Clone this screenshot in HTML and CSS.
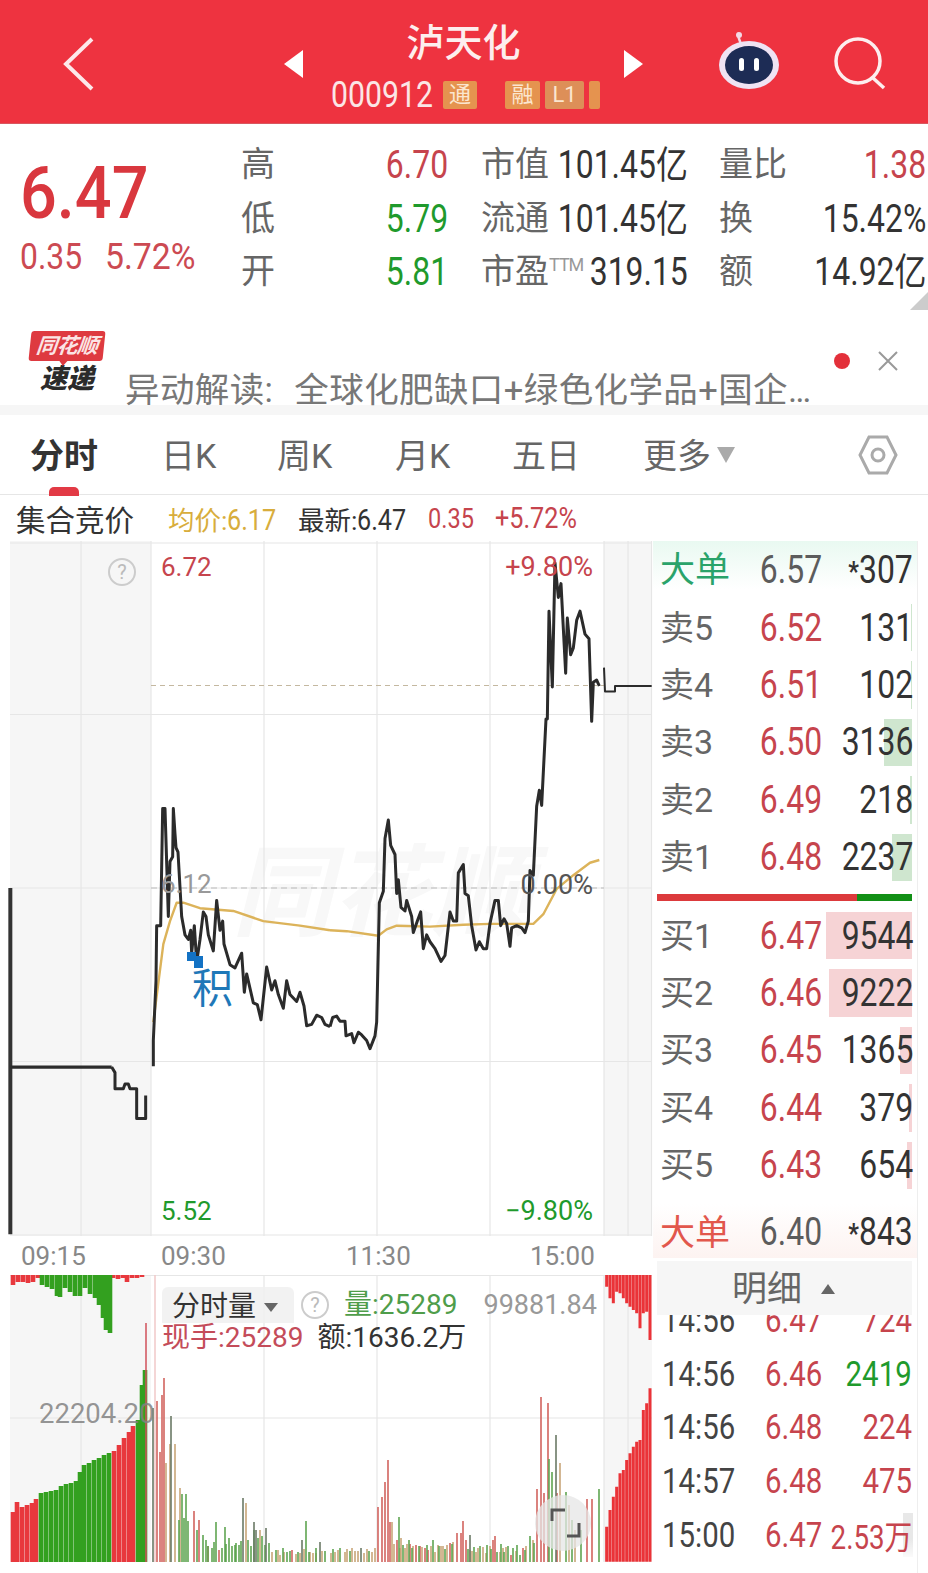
FILE: index.html
```html
<!DOCTYPE html>
<html lang="zh-CN">
  <head>
    <meta charset="UTF-8" />
    <meta name="viewport" content="width=device-width, initial-scale=1.0" />
    <title>泸天化 000912</title>
    <link rel="stylesheet" href="styles.css">
  </head>
  <body>
    <div class="page">
      <header class="topbar">
        <svg class="back-icon" viewBox="0 0 40 60"><path d="M32 6 L6 31 L32 56" /></svg>
        <div class="stock-switch">
          <span class="tri-left"></span>
          <div class="stock-name">
            <div class="stock-title">泸天化</div>
            <div class="stock-code">
              <span class="code-num"><span>000912</span></span>
              <span class="tag tag-tong"><i>通</i></span>
              <span class="tag tag-rong">融</span>
              <span class="tag tag-l1">L1</span>
              <span class="tag tag-cut"></span>
            </div>
          </div>
          <span class="tri-right"></span>
        </div>
        <svg class="robot-icon" viewBox="0 0 64 60">
          <path d="M24 12 C22 6 20 4 22 1" fill="none" stroke="#f3d9e6" stroke-width="2.5" />
          <circle cx="22" cy="3" r="3" fill="#f3d9e6" />
          <ellipse cx="32" cy="33" rx="30" ry="24" fill="#efe3f3" />
          <ellipse cx="32" cy="33" rx="24" ry="19" fill="#1d2c55" />
          <rect x="22" y="26" width="5" height="13" rx="2.5" fill="#fff" />
          <rect x="37" y="26" width="5" height="13" rx="2.5" fill="#fff" />
        </svg>
        <svg class="search-icon" viewBox="0 0 56 56"><circle cx="25" cy="25" r="22" /><path d="M40 42 L51 52" /></svg>
      </header>

      <section class="quote">
        <div class="price-box">
          <div class="price">6.47</div>
          <div class="change"><span>0.35</span><span>5.72%</span></div>
        </div>
        <div class="quote-grid">
          <span class="q-label">高</span><span class="q-val up">6.70</span>
          <span class="q-label">市值</span><span class="q-val">101.45亿</span>
          <span class="q-label">量比</span><span class="q-val up">1.38</span>

          <span class="q-label">低</span><span class="q-val down">5.79</span>
          <span class="q-label">流通</span><span class="q-val">101.45亿</span>
          <span class="q-label">换</span><span class="q-val">15.42%</span>

          <span class="q-label">开</span><span class="q-val down">5.81</span>
          <span class="q-label">市盈<sup class="ttm">TTM</sup></span><span class="q-val">319.15</span>
          <span class="q-label">额</span><span class="q-val">14.92亿</span>
        </div>
        <span class="corner"></span>
      </section>

      <section class="news">
        <div class="news-logo">
          <div class="logo-tag">同花顺</div>
          <div class="logo-sub">速递</div>
        </div>
        <div class="news-text">异动解读:<span class="news-body">全球化肥缺口+绿色化学品+国企…</span></div>
        <span class="news-dot"></span>
        <svg class="news-close" viewBox="0 0 22 22"><path d="M2 2 L20 20 M20 2 L2 20" /></svg>
      </section>

      <nav class="tabs">
        <span class="tab tab-active">分时</span>
        <span class="tab">日K</span>
        <span class="tab">周K</span>
        <span class="tab">月K</span>
        <span class="tab">五日</span>
        <span class="tab tab-more">更多<i class="more-tri"></i></span>
        <svg class="gear-icon" viewBox="0 0 40 40"><path d="M11 2 H29 L38 20 L29 38 H11 L2 20 Z" /><circle cx="20" cy="20" r="6" /></svg>
      </nav>

      <div class="info-row">
        <span class="info-title">集合竞价</span>
        <span class="info-avg">均价:<span class="n">6.17</span></span>
        <span class="info-last">最新:<span class="n">6.47</span></span>
        <span class="info-chg up"><span class="n">0.35</span></span>
        <span class="info-pct up"><span class="n">+5.72%</span></span>
      </div>

      <main class="board">
        <div class="chart-col">
          <div class="price-chart">
            <div class="watermark">同花顺</div>
            <svg class="plot" viewBox="10 541 642 695">
              <rect class="side" x="10" y="541" width="141" height="695" />
              <rect class="side" x="604" y="541" width="48" height="695" />
              <path class="grid" d="M10 543H652M10 714.5H652M10 888H652M10 1061.5H652M10 1235H652M81 541V1236M151 541V1236M264 541V1236M377 541V1236M490 541V1236M604 541V1236M628 541V1236M651.5 541V1236" />
              <path class="dash-brown" d="M151 685.5H604" />
              <path class="dash-gray" d="M151 888H604" />
              <g transform="translate(0 540) scale(.33333 .45914)">
                <polyline class="avg" points="460,1050 490,880 510,830 530,790 550,790 600,802 700,808 790,830 900,840 990,850" />
                <polyline class="line-thick" points="31,758 31,1512" />
                <polyline class="line-pre" points="31,1148 335,1148" />
                <polyline class="line" points="335,1148 345,1160 345,1195 370,1195 375,1185 385,1185 390,1195 410,1195 410,1260 437,1260 437,1210" />
                <polyline class="line" points="460,1146 460,1090 468,960 470,840 482,840 488,585 495,585 505,820 510,700 518,690 520,585 525,640 528,670 534,680 545,820 555,860 565,870 572,850 575,900 583,840 590,920 600,870 610,810 618,820 625,860 640,895 650,785 660,850 668,830 672,880 690,925 705,932 725,900 733,985 740,945 760,1008 772,1012 783,1045 800,930 815,980 825,960 835,990 850,1020 860,960 870,990 890,1005 900,985 912,1015 920,1058 935,1055 950,1035 965,1040 975,1055 990,1060" />
              </g>
              <g transform="translate(330 540) scale(.33333 .45914)">
                <polyline class="avg" points="0,850 50,852 145,862 170,848 200,840 300,842 400,838 480,836 610,836 640,815 680,760 730,730 780,703 808,697" />
                <polyline class="line" points="0,1060 8,1040 20,1037 30,1048 45,1048 48,1080 65,1075 72,1095 85,1072 95,1078 110,1090 120,1108 135,1080 140,1050 148,790 160,765 165,650 175,610 182,665 195,685 200,770 205,740 213,800 225,808 230,785 245,820 250,855 262,830 272,810 280,890 290,860 300,875 315,890 333,918 345,905 360,810 370,830 380,830 385,725 400,707 405,770 415,775 425,840 438,893 448,875 460,890 470,890 480,835 495,785 505,785 512,840 522,825 530,835 540,885 545,845 560,840 575,845 585,855 595,830 600,720 610,730 620,580 628,545 635,578 648,390 652,390 657,155 667,320 675,50 685,125 693,95 707,290 712,170 722,250 730,235 740,175 750,155 765,205 777,215 785,395 790,310 800,305 808,318" />
                <polyline class="line-thin" points="822,278 825,330 855,330 855,318 965,318" />
              </g>
            </svg>
            <span class="help help-top">?</span>
            <span class="axis-label lab-high up">6.72</span>
            <span class="axis-label lab-mid gray">6.12</span>
            <span class="axis-label lab-low down">5.52</span>
            <span class="axis-label pct-high up">+9.80%</span>
            <span class="axis-label pct-mid dark">0.00%</span>
            <span class="axis-label pct-low down">−9.80%</span>
            <span class="marker-dot dot-a"></span>
            <span class="marker-dot dot-b"></span>
            <span class="marker-text">积</span>
          </div>

          <div class="time-axis">
            <span class="t-a">09:15</span>
            <span class="t-b">09:30</span>
            <span class="t-c">11:30</span>
            <span class="t-d">15:00</span>
          </div>

          <div class="volume-chart">
            <svg class="plot" viewBox="10 1275 642 287">
              <rect class="side" x="10" y="1275" width="141" height="287" />
              <rect class="side" x="604" y="1275" width="48" height="287" />
              <path class="grid" d="M10 1275.5H652M10 1418H652M81 1275V1562M264 1275V1562M377 1275V1562M490 1275V1562M604 1275V1562M628 1275V1562" />
              <path class="pink-line" d="M155 1275V1562" />

              <!-- order imbalance, left panel -->
              <path class="bar-red-wide" d="M13 1275V1285M18 1275V1282M23 1275V1282M28 1275V1283M33 1275V1282M38 1275V1278M113 1275V1278M118 1275V1279M123 1275V1278M127 1275V1282M132 1275V1278M137 1275V1278M142 1275V1277" />
              <path class="bar-green-wide" d="M42 1275V1285M47 1275V1287M52 1275V1289M57 1275V1296M60 1275V1297M65 1275V1288M70 1275V1292M75 1275V1296M80 1275V1296M85 1275V1288M90 1275V1294M95 1275V1298M99 1275V1305M103 1275V1318M106 1275V1330M110 1275V1333" />
              <path class="bar-red-wide" d="M13 1562V1512M17 1562V1502M22 1562V1507M27 1562V1505M32 1562V1503M36 1562V1499M114 1562V1451M119 1562V1445M124 1562V1438M129 1562V1432M133 1562V1426" />
              <path class="bar-green-wide" d="M41 1562V1493M46 1562V1492M51 1562V1491M56 1562V1490M61 1562V1486M66 1562V1484M71 1562V1483M76 1562V1481M80 1562V1472M84 1562V1465M89 1562V1463M94 1562V1460M99 1562V1458M104 1562V1455M109 1562V1453M138 1562V1420M142 1562V1385M145 1562V1370" />
              <path class="bar-red-thin" d="M146 1562V1323" />

              <!-- order imbalance, right panel -->
              <g transform="translate(330 1270) scale(.33333)">
                <path class="bar-red-right" d="M830 15V50M840 15V85M850 15V100M860 15V65M870 15V70M880 15V85M890 15V100M900 15V110M910 15V120M920 15V130M930 15V175M940 15V130M950 15V125M960 15V210M830 875V770M840 875V720M850 875V680M860 875V650M870 875V610M880 875V600M890 875V570M900 875V550M910 875V530M920 875V515M930 875V510M940 875V420M950 875V400M960 875V355" />
              </g>

              <!-- traded volume -->
              <path class="vol-red" d="M157 1562V1401M162 1562V1395M164 1562V1378M160 1562V1452M194 1562V1511M199 1562V1520M208 1562V1546M219 1562V1550M292 1562V1550M378 1562V1507M382 1562V1497M385 1562V1482M390 1562V1522M388 1562V1460M397 1562V1540M410 1562V1544M416 1562V1545M420 1562V1546M425 1562V1548M428 1562V1550M450 1562V1543M457 1562V1533M461 1562V1533M463 1562V1521M466 1562V1540M493 1562V1540M495 1562V1536M511 1562V1555M523 1562V1548M537 1562V1489M541 1562V1397M544 1562V1493M548 1562V1403M557 1562V1493M587 1562V1499M592 1562V1499" />
              <path class="vol-tan" d="M170 1562V1444M175 1562V1444M166 1562V1463M180 1562V1488M246 1562V1503M260 1562V1530M392 1562V1522M280 1562V1555M300 1562V1553M310 1562V1552M316 1562V1553M335 1562V1552M345 1562V1552M355 1562V1551M364 1562V1553M372 1562V1552M400 1562V1548M405 1562V1548M438 1562V1545M443 1562V1546M470 1562V1550M476 1562V1552M486 1562V1553M500 1562V1552M506 1562V1547M560 1562V1463M569 1562V1505M575 1562V1530M272 1562V1552M278 1562V1550M284 1562V1552M296 1562V1554M304 1562V1549M313 1562V1553M322 1562V1551M331 1562V1553M338 1562V1550M347 1562V1549M352 1562V1548M358 1562V1551M367 1562V1549M375 1562V1548M394 1562V1544M401 1562V1538M407 1562V1544M413 1562V1546M422 1562V1547M431 1562V1546M435 1562V1552M441 1562V1546M447 1562V1545M453 1562V1542M472 1562V1551M478 1562V1548M483 1562V1547M490 1562V1546M503 1562V1548M516 1562V1551M526 1562V1546M533 1562V1540" />
              <path class="vol-green" d="M182 1562V1494M186 1562V1494M179 1562V1520M184 1562V1518M188 1562V1521M203 1562V1535M208 1562V1546M212 1562V1548M216 1562V1522M222 1562V1548M225 1562V1527M229 1562V1538M232 1562V1546M236 1562V1543M239 1562V1545M254 1562V1530M265 1562V1545M276 1562V1550M287 1562V1552M306 1562V1521M316 1562V1548M340 1562V1548M399 1562V1517M403 1562V1545M409 1562V1540M439 1562V1546M474 1562V1547M487 1562V1545M497 1562V1552M508 1562V1546M513 1562V1548M520 1562V1555M530 1562V1536M549 1562V1459M552 1562V1472M566 1562V1492M572 1562V1520M581 1562V1530M599 1562V1489M197 1562V1530M206 1562V1540M214 1562V1542M226 1562V1544M235 1562V1545M241 1562V1541M248 1562V1540M251 1562V1546M258 1562V1538M262 1562V1536M269 1562V1543M283 1562V1548M290 1562V1551M298 1562V1552M309 1562V1552M325 1562V1551M333 1562V1549M350 1562V1551M369 1562V1551M412 1562V1548M419 1562V1546M427 1562V1545M433 1562V1540M445 1562V1549M452 1562V1544M468 1562V1549M480 1562V1546M491 1562V1549M501 1562V1544M504 1562V1552M517 1562V1545M525 1562V1550M534 1562V1543" />
              <path class="vol-dark" d="M153 1562V1408M171 1562V1416M243 1562V1498M254 1562V1522M266 1562V1528M256 1562V1530M302 1562V1540M320 1562V1542M361 1562V1548M470 1562V1535M556 1562V1435" />
            </svg>
            <div class="vol-head">
              <div class="vol-select">分时量<i class="select-tri"></i></div>
              <span class="help help-vol">?</span>
              <span class="vol-amount">量:25289</span>
              <span class="vol-max">99881.84</span>
            </div>
            <div class="vol-sub">
              <span class="vol-hand">现手:25289</span>
              <span class="vol-money">额:1636.2万</span>
            </div>
            <span class="vol-mid">22204.20</span>
            <div class="zoom-btn">
              <svg viewBox="0 0 56 56"><path d="M17 26 V15 H30 M44 28 V41 H32" /></svg>
            </div>
          </div>
        </div>

        <aside class="book">
          <div class="big-row big-green">
            <span class="big-label">大单</span><span class="big-price">6.57</span><span class="big-vol"><b>*</b>307</span>
          </div>
          <div class="asks">
            <div class="row"><span class="row-label">卖5</span><span class="up">6.52</span><span class="vol">131</span><i class="bar bar-ask" style="width:1px"></i></div>
            <div class="row"><span class="row-label">卖4</span><span class="up">6.51</span><span class="vol">102</span><i class="bar bar-ask" style="width:1px"></i></div>
            <div class="row"><span class="row-label">卖3</span><span class="up">6.50</span><span class="vol">3136</span><i class="bar bar-ask" style="width:28px"></i></div>
            <div class="row"><span class="row-label">卖2</span><span class="up">6.49</span><span class="vol">218</span><i class="bar bar-ask" style="width:2px"></i></div>
            <div class="row"><span class="row-label">卖1</span><span class="up">6.48</span><span class="vol">2237</span><i class="bar bar-ask" style="width:20px"></i></div>
          </div>
          <div class="balance"><span class="balance-red"></span><span class="balance-green"></span></div>
          <div class="bids">
            <div class="row"><span class="row-label">买1</span><span class="up">6.47</span><span class="vol">9544</span><i class="bar bar-bid" style="width:86px"></i></div>
            <div class="row"><span class="row-label">买2</span><span class="up">6.46</span><span class="vol">9222</span><i class="bar bar-bid" style="width:83px"></i></div>
            <div class="row"><span class="row-label">买3</span><span class="up">6.45</span><span class="vol">1365</span><i class="bar bar-bid" style="width:12px"></i></div>
            <div class="row"><span class="row-label">买4</span><span class="up">6.44</span><span class="vol">379</span><i class="bar bar-bid" style="width:3px"></i></div>
            <div class="row"><span class="row-label">买5</span><span class="up">6.43</span><span class="vol">654</span><i class="bar bar-bid" style="width:5px"></i></div>
          </div>
          <div class="big-row big-red">
            <span class="big-label">大单</span><span class="big-price">6.40</span><span class="big-vol"><b>*</b>843</span>
          </div>
          <div class="detail-head">明细<i class="detail-tri"></i></div>
          <div class="trades">
            <div class="trade"><span class="trade-time">14:56</span><span class="up">6.47</span><span class="up">724</span></div>
            <div class="trade"><span class="trade-time">14:56</span><span class="up">6.46</span><span class="down">2419</span></div>
            <div class="trade"><span class="trade-time">14:56</span><span class="up">6.48</span><span class="up">224</span></div>
            <div class="trade"><span class="trade-time">14:57</span><span class="up">6.48</span><span class="up">475</span></div>
            <div class="trade"><span class="trade-time">15:00</span><span class="up">6.47</span><span class="up trade-wan">2.53万</span><i class="bar bar-trade" style="width:10px"></i></div>
          </div>
          <div class="book-fade"></div>
        </aside>
      </main>
    </div>
  </body>
</html>
```

FILE: styles.css
```css
* {
  box-sizing: border-box;
}

body {
  margin: 0;
  background-color: #fff;
  font-family: 'Roboto', 'Noto Sans CJK SC', sans-serif;
  color: #333;
}

i {
  font-style: normal;
}

.page {
  width: 928px;
  height: 1573px;
  overflow: hidden;
  display: flex;
  flex-direction: column;
}

.up {
  color: #c6444d;
}

.down {
  color: #1f9a2c;
}

.gray {
  color: #999;
}

.dark {
  color: #555;
}

/* header */
.topbar {
  height: 124px;
  flex: none;
  background-color: #ee3340;
  border-bottom: 1px solid #d8575f;
  display: flex;
  align-items: flex-start;
  color: #fff;
}

.back-icon {
  width: 40px;
  height: 60px;
  margin: 33px 0 0 60px;
  fill: none;
  stroke: #fde8ea;
  stroke-width: 4;
}

.stock-switch {
  display: flex;
  align-items: flex-start;
  margin-left: 184px;
  width: 360px;
}

.tri-left,
.tri-right {
  width: 0;
  height: 0;
  margin-top: 50px;
  border-top: 14px solid transparent;
  border-bottom: 14px solid transparent;
}

.tri-left {
  border-right: 19px solid #fff;
}

.tri-right {
  border-left: 19px solid #fff;
}

.stock-name {
  width: 321px;
  text-align: center;
}

.stock-title {
  height: 68px;
  padding-top: 17px;
  font-size: 38px;
  font-weight: 500;
  line-height: 52px;
  color: #fdeeee;
}

.stock-code {
  display: flex;
  align-items: center;
  height: 30px;
  margin-top: 12px;
  margin-left: 28px;
  font-size: 36px;
  color: #fbe6e6;
}

.code-num {
  width: 101px;
  flex: none;
  text-align: left;
}

.code-num span {
  display: inline-block;
  transform: scaleX(.84);
  transform-origin: left center;
}

.tag {
  display: block;
  flex: none;
  height: 28px;
  margin-left: 5px;
  background-color: #e5934f;
  border-radius: 2px;
  font-size: 22px;
  line-height: 28px;
  color: #fbe6cf;
  overflow: hidden;
}

.tag-tong {
  width: 34px;
  margin-left: 11px;
  text-align: center;
}

.tag-rong {
  width: 35px;
  margin-left: 28px;
}

.tag-l1 {
  width: 39px;
  background-color: #dd8f58;
}

.tag-cut {
  width: 11px;
}

.robot-icon {
  width: 64px;
  height: 60px;
  margin: 32px 0 0 73px;
}

.search-icon {
  width: 56px;
  height: 56px;
  margin: 36px 0 0 52px;
  fill: none;
  stroke: #fdeeee;
  stroke-width: 3.5;
}

/* quote block */
.quote {
  position: relative;
  height: 196px;
  flex: none;
  display: flex;
}

.price-box {
  width: 241px;
  padding: 31px 0 0 20px;
}

.price {
  font-size: 72px;
  font-weight: 500;
  line-height: 78px;
  color: #d9373e;
  transform: scaleX(.9);
  transform-origin: left center;
}

.change {
  display: flex;
  margin-top: 3px;
  font-size: 37.5px;
  line-height: 40px;
  color: #cc4a52;
}

.change span {
  display: block;
  transform: scaleX(.9);
  transform-origin: left center;
}

.change span:first-child {
  width: 85px;
  flex: none;
  transform: scaleX(.85);
}

.quote-grid {
  flex: 1;
  display: grid;
  grid-template-columns: 60px 147px 103px 137px 110px 128px;
  grid-template-rows: repeat(3, 53.5px);
  padding-top: 14px;
  font-size: 38px;
  line-height: 53px;
  white-space: nowrap;
}

.q-label {
  font-size: 34px;
  color: #666;
}

.q-label:nth-child(6n+3) {
  margin-left: 33px;
}

.q-label:nth-child(6n+5) {
  margin-left: 31px;
}

/* the reference uses a tall narrow digit face, so digits get squeezed */
.q-val {
  justify-self: end;
  padding-top: 1px;
  transform: scaleX(.84);
  transform-origin: right center;
}

.ttm {
  font-size: 18px;
  line-height: 0;
  color: #999;
  vertical-align: 12px;
  letter-spacing: -1px;
}

.corner {
  position: absolute;
  right: 0;
  bottom: 10px;
  width: 0;
  height: 0;
  border-left: 18px solid transparent;
  border-bottom: 18px solid #ccc;
}

/* news strip */
.news {
  position: relative;
  height: 95px;
  flex: none;
  border-bottom: 10px solid #f6f6f6;
  padding-left: 125px;
}

.news-logo {
  position: absolute;
  left: 30px;
  top: 11px;
  width: 74px;
}

.logo-tag {
  position: relative;
  height: 30px;
  background-color: #de3a40;
  border-radius: 3px;
  transform: skewX(-6deg);
  font-size: 21px;
  font-weight: 700;
  font-style: italic;
  line-height: 30px;
  letter-spacing: -.5px;
  text-align: center;
  color: #fbe4e4;
}

.logo-tag::after {
  content: '';
  position: absolute;
  left: 31px;
  top: 30px;
  border-left: 4px solid transparent;
  border-right: 4px solid transparent;
  border-top: 5px solid #de3a40;
}

.logo-sub {
  margin-top: 3px;
  font-size: 27px;
  font-weight: 900;
  font-style: italic;
  line-height: 30px;
  text-align: center;
  color: #2b2b2b;
}

.news-text {
  padding-top: 46px;
  font-size: 34.5px;
  line-height: 48px;
  letter-spacing: .4px;
  color: #777;
  white-space: nowrap;
}

.news-body {
  margin-left: 21px;
}

.news-dot {
  position: absolute;
  left: 834px;
  top: 33px;
  width: 16px;
  height: 16px;
  border-radius: 50%;
  background-color: #e3303a;
}

.news-close {
  position: absolute;
  left: 877px;
  top: 30px;
  width: 22px;
  height: 22px;
  fill: none;
  stroke: #999;
  stroke-width: 2;
}

/* tabs */
.tabs {
  position: relative;
  height: 80px;
  flex: none;
  border-bottom: 1px solid #e6e6e6;
  font-size: 34px;
  color: #666;
}

.tab {
  position: absolute;
  top: 17px;
  line-height: 48px;
  white-space: nowrap;
}

.tab:nth-child(1) { left: 30px; }
.tab:nth-child(2) { left: 161px; }
.tab:nth-child(3) { left: 277px; }
.tab:nth-child(4) { left: 395px; }
.tab:nth-child(5) { left: 512px; }
.tab:nth-child(6) { left: 643px; }

.tab-active {
  font-weight: 700;
  color: #333;
}

.tab-active::after {
  content: '';
  position: absolute;
  left: 19px;
  top: 55px;
  width: 30px;
  height: 9px;
  border-radius: 5px 5px 0 0;
  background-color: #e23a45;
}

.more-tri {
  display: inline-block;
  margin-left: 6px;
  vertical-align: 5px;
  border-left: 9px solid transparent;
  border-right: 9px solid transparent;
  border-top: 16px solid #aaa;
}

.gear-icon {
  position: absolute;
  left: 858px;
  top: 20px;
  width: 40px;
  height: 40px;
  fill: none;
  stroke: #aaa;
  stroke-width: 3;
}

/* info line */
.info-row {
  height: 46px;
  flex: none;
  display: flex;
  align-items: center;
  gap: 21px;
  padding-left: 16px;
  font-size: 26.5px;
  white-space: nowrap;
}

.info-row > span {
  flex: none;
}

.info-title {
  width: 131px;
  font-size: 29.5px;
  color: #333;
}

.info-row .n {
  display: inline-block;
  font-size: 30px;
  line-height: 30px;
  transform: scaleX(.84);
  transform-origin: left center;
}

.info-avg {
  width: 109px;
  color: #d8ad3c;
}

.info-last {
  width: 109px;
  color: #333;
}

.info-chg {
  width: 46px;
}

.info-row .info-chg .n {
  font-size: 28px;
}

.info-pct {
  width: 84px;
}

/* main board */
.board {
  flex: 1;
  display: flex;
  padding-left: 10px;
}

.chart-col {
  width: 642px;
  flex: none;
  display: flex;
  flex-direction: column;
}

.price-chart {
  position: relative;
  height: 695px;
  flex: none;
}

.plot {
  display: block;
  width: 100%;
  height: 100%;
  position: absolute;
  left: 0;
  top: 0;
  overflow: visible;
}

.side {
  fill: #f6f6f6;
}

.grid {
  fill: none;
  stroke: #e6e6e6;
  stroke-width: 1.2;
}

.dash-brown {
  fill: none;
  stroke: #c4b8a0;
  stroke-width: 1.2;
  stroke-dasharray: 5 4;
}

.dash-gray {
  fill: none;
  stroke: #bbb;
  stroke-width: 1.2;
  stroke-dasharray: 6 4;
}

.line,
.line-pre,
.line-thick,
.line-thin,
.avg {
  fill: none;
  stroke-linejoin: round;
  vector-effect: non-scaling-stroke;
}

.line {
  stroke: #2b2b2b;
  stroke-width: 3;
}

.line-pre {
  stroke: #2b2b2b;
  stroke-width: 3.4;
}

.line-thick {
  stroke: #333;
  stroke-width: 4;
}

.line-thin {
  stroke: #2b2b2b;
  stroke-width: 2;
}

.avg {
  stroke: #dcb35a;
  stroke-width: 2.4;
}

.watermark {
  position: absolute;
  left: 222px;
  top: 298px;
  font-size: 100px;
  font-weight: 700;
  font-style: italic;
  line-height: 110px;
  color: #f8f8f8;
  white-space: nowrap;
}

.axis-label {
  position: absolute;
  font-size: 26px;
  line-height: 30px;
  white-space: nowrap;
}

.lab-high { left: 151px; top: 11px; }
.lab-mid { left: 151px; top: 328px; }
.lab-low { left: 151px; top: 655px; }
.pct-high { right: 59px; top: 11px; font-size: 27px; }
.pct-mid { right: 59px; top: 329px; font-size: 27px; }
.pct-low { right: 59px; top: 655px; font-size: 27px; }

.help {
  position: absolute;
  width: 28px;
  height: 28px;
  border: 2px solid #ccc;
  border-radius: 50%;
  font-size: 20px;
  line-height: 24px;
  text-align: center;
  color: #bbb;
}

.help-top {
  left: 98px;
  top: 17px;
}

.marker-dot {
  position: absolute;
  background-color: #1372c4;
}

.dot-a {
  left: 177px;
  top: 411px;
  width: 9px;
  height: 9px;
}

.dot-b {
  left: 184px;
  top: 415px;
  width: 9px;
  height: 12px;
}

.marker-text {
  position: absolute;
  left: 182px;
  top: 425px;
  font-size: 41px;
  line-height: 46px;
  color: #1f78b8;
}

.time-axis {
  position: relative;
  height: 39px;
  flex: none;
  font-size: 26px;
  line-height: 39px;
  color: #888;
}

.time-axis span {
  position: absolute;
  top: 1px;
}

.t-a { left: 11px; }
.t-b { left: 151px; }
.t-c { left: 336px; }
.t-d { left: 520px; }

.volume-chart {
  position: relative;
  height: 287px;
  flex: none;
}

.pink-line {
  stroke: #f0c9c9;
  stroke-width: 1.5;
}

.bar-red-wide,
.bar-green-wide {
  fill: none;
  stroke-width: 4.6;
}

.bar-red-wide {
  stroke: #e8383d;
}

.bar-green-wide {
  stroke: #33a01f;
}

.bar-red-thin {
  stroke: #d0505a;
  stroke-width: 1.5;
}

.bar-red-right {
  fill: none;
  stroke: #ea3338;
  stroke-width: 9;
}

.vol-red,
.vol-tan,
.vol-green,
.vol-dark {
  fill: none;
  stroke-width: 1.6;
}

.vol-red { stroke: #d2645f; }
.vol-tan { stroke: #c9a678; }
.vol-green { stroke: #5fa552; }
.vol-dark { stroke: #6b7a66; }

.vol-head {
  position: absolute;
  left: 152px;
  top: 10px;
  display: flex;
  align-items: center;
  font-size: 28px;
  line-height: 40px;
  white-space: nowrap;
}

.vol-select {
  width: 132px;
  height: 36px;
  padding-left: 10px;
  background-color: rgba(240, 240, 240, .85);
  border-radius: 6px 6px 0 0;
  color: #333;
}

.select-tri {
  display: inline-block;
  margin-left: 8px;
  vertical-align: 4px;
  border-left: 7px solid transparent;
  border-right: 7px solid transparent;
  border-top: 9px solid #666;
}

.help-vol {
  position: static;
  margin-left: 7px;
}

.vol-amount {
  margin-left: 15px;
  color: #4f9d4a;
}

.vol-max {
  margin-left: 26px;
  font-size: 27px;
  color: #999;
}

.vol-sub {
  position: absolute;
  left: 152px;
  top: 46px;
  display: flex;
  gap: 14px;
  font-size: 28px;
  line-height: 34px;
  white-space: nowrap;
}

.vol-hand {
  color: #c44c5a;
}

.vol-money {
  color: #333;
}

.vol-mid {
  position: absolute;
  left: 29px;
  top: 123px;
  font-size: 27.5px;
  line-height: 32px;
  color: rgba(130, 130, 130, .85);
}

.zoom-btn {
  position: absolute;
  left: 525px;
  top: 220px;
  width: 56px;
  height: 56px;
  border-radius: 50%;
  background-color: rgba(230, 230, 230, .75);
}

.zoom-btn svg {
  display: block;
  fill: none;
  stroke: #555;
  stroke-width: 3;
}

/* order book */
.book {
  position: relative;
  width: 265px;
  flex: none;
  margin-left: 1px;
  display: flex;
  flex-direction: column;
  border-right: 1px solid #eee;
  font-size: 38px;
}

.big-row,
.row {
  display: grid;
  grid-template-columns: 100px 62px 91px;
  align-items: center;
  padding-left: 7px;
  white-space: nowrap;
}

.big-row {
  height: 48px;
  flex: none;
  padding-bottom: 4px;
}

.big-green {
  background: linear-gradient(to bottom, #e9f9f1, #ffffff);
}

.big-red {
  height: 54px;
  margin-top: 10px;
  padding-bottom: 0;
  background: linear-gradient(to bottom, #fff, #fdf3f1);
}

.big-label {
  padding-bottom: 6px;
  font-size: 35px;
  color: #2aa36a;
}

.big-red .big-label {
  color: #e2574c;
}

.big-price,
.big-vol,
.row > span:not(.row-label),
.trade > span:not(.trade-time) {
  justify-self: end;
  transform: scaleX(.84);
  transform-origin: right center;
}

.big-price {
  color: #5c5c5c;
}

.big-vol {
  color: #333;
}

.big-vol b {
  font-size: 28px;
  font-weight: 700;
  vertical-align: 2px;
}

.asks {
  margin-top: 10px;
}

.row {
  position: relative;
  height: 57.4px;
}

.row > span {
  position: relative;
  z-index: 1;
}

.row-label {
  padding-bottom: 5px;
  font-size: 34px;
  color: #666;
}

.vol {
  color: #333;
}

.bar {
  position: absolute;
  right: 5px;
  top: 5px;
  bottom: 5px;
}

.bar-ask {
  background-color: #cfe6cf;
}

.bar-bid {
  background-color: #f6d3d5;
}

.bar-trade {
  right: 4px;
  background-color: #e8e8e8;
}

.balance {
  display: flex;
  height: 7px;
  flex: none;
  margin: 8px 5px 6px 4px;
}

.balance-red {
  width: 200px;
  background-color: #dc3a3c;
}

.balance-green {
  flex: 1;
  background-color: #129016;
}

.detail-head {
  position: relative;
  z-index: 1;
  height: 54px;
  flex: none;
  margin: 3px 5px 0 4px;
  padding-left: 75px;
  background-color: #f6f6f6;
  font-size: 35px;
  line-height: 58px;
  color: #666;
}

.detail-tri {
  display: inline-block;
  margin-left: 19px;
  vertical-align: 7px;
  border-left: 7px solid transparent;
  border-right: 7px solid transparent;
  border-bottom: 10px solid #666;
}

.trades {
  flex: 1;
  overflow: hidden;
  font-size: 35px;
}

.trade {
  position: relative;
  display: grid;
  grid-template-columns: 100px 60px 90px;
  align-items: center;
  height: 53.6px;
  padding-left: 9px;
  white-space: nowrap;
}

.trade > span {
  position: relative;
  z-index: 1;
}

.trade:first-child {
  margin-top: -21px;
}

.trade-time {
  justify-self: start;
  color: #444;
  transform: scaleX(.84);
  transform-origin: left center;
}

.trade > .trade-wan {
  font-size: 33px;
  transform: scaleX(.78);
}

.book-fade {
  position: absolute;
  left: 0;
  right: 0;
  bottom: 0;
  height: 34px;
  background: linear-gradient(to bottom, rgba(255, 255, 255, 0), #fff 65%);
}
```
